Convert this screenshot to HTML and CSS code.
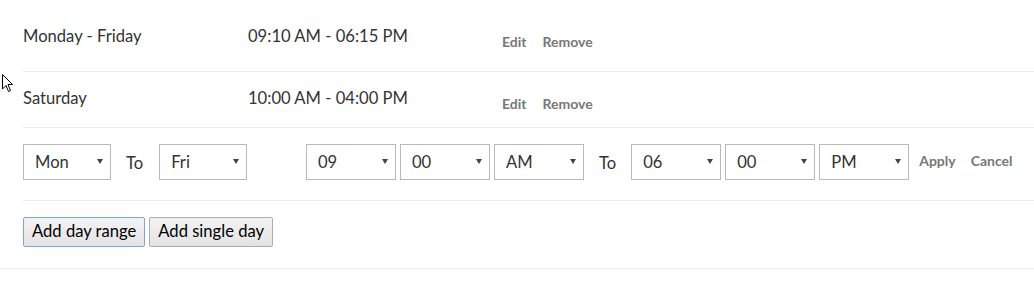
FILE: index.html
```html
<!DOCTYPE html>
<html lang="en">
<head>
    <meta charset="UTF-8">
    <meta name="viewport" content="width=device-width, initial-scale=1.0">
    <title>Opening Hours</title>
    <link rel="stylesheet" href="styles.css">
</head>
<body>
  <section class="hours">
    <div class="hours-list">
      <div class="hours-row first">
        <span class="day">Monday - Friday</span>
        <span class="time">09:10 AM - 06:15 PM</span>
        <span class="actions"><a>Edit</a><a>Remove</a></span>
      </div>
      <div class="hours-row">
        <span class="day">Saturday</span>
        <span class="time">10:00 AM - 04:00 PM</span>
        <span class="actions"><a>Edit</a><a>Remove</a></span>
      </div>

      <!-- Edit form -->
      <div class="edit-row">
        <div class="day-range">
          <span class="select day-select"><select><option>Mon</option></select></span>
          <span class="to">To</span>
          <span class="select day-select"><select><option>Fri</option></select></span>
        </div>
        <div class="time-range">
          <span class="select"><select><option>09</option></select></span>
          <span class="select"><select><option>00</option></select></span>
          <span class="select"><select><option>AM</option></select></span>
          <span class="to">To</span>
          <span class="select"><select><option>06</option></select></span>
          <span class="select"><select><option>00</option></select></span>
          <span class="select"><select><option>PM</option></select></span>
        </div>
        <span class="actions form-actions"><a>Apply</a><a>Cancel</a></span>
      </div>

      <div class="add-row">
        <button class="btn focused">Add day range</button>
        <button class="btn">Add single day</button>
      </div>
    </div>
  </section>

  <svg class="cursor" width="13" height="20" viewBox="0 0 13 20">
    <path d="M1.5 1.5 L1.5 16 L5 12.5 L7.5 18.5 L9.5 17.5 L7 11.5 L11.5 11.5 Z" fill="#fff" stroke="#000" stroke-width="1" stroke-linejoin="miter"/>
  </svg>
</body>
</html>
```

FILE: styles.css
```css
:root {
  --clr-text: #333;
  --clr-muted: #777;
  --clr-line: #ededed;
  --clr-field: #b9b9b9;
}
* { margin: 0; padding: 0; box-sizing: border-box; }
body {
  font-family: Lato, 'Open Sans', sans-serif;
  font-size: 16.6px;
  line-height: 20px;
  color: var(--clr-text);
  background: #fff;
}
.hours {
  border-bottom: 1px solid var(--clr-line);
}
.hours-list {
  padding-left: 23px;
}
.hours-row {
  display: flex;
  align-items: flex-start;
  height: 56px;
  padding-top: 16px;
  border-bottom: 1px solid var(--clr-line);
}
.hours-row.first {
  height: 72px;
  padding-top: 26px;
}
.day { width: 225px; }
.time { width: 254px; }
.actions {
  display: flex;
  gap: 16px;
  padding-top: 6px;
  font-size: 14px;
  line-height: 20px;
  font-weight: 700;
  color: var(--clr-muted);
}
.actions a { cursor: pointer; }

/* Edit form */
.edit-row {
  display: flex;
  align-items: center;
  height: 73px;
  padding-top: 16px;
  padding-bottom: 20px;
  border-bottom: 1px solid var(--clr-line);
}
.day-range {
  display: flex;
  align-items: center;
  width: 283px;
}
.time-range {
  display: flex;
  align-items: center;
  gap: 4px;
}
.to {
  margin: 0 16px 0 15px;
  padding-top: 2px;
}
.time-range .to { margin: 0 11px; }
.select {
  position: relative;
  display: block;
  width: 90px;
  height: 36px;
}
.day-select { width: 88px; }
.select select {
  appearance: none;
  -webkit-appearance: none;
  width: 100%;
  height: 100%;
  padding: 0 11px;
  border: 1px solid var(--clr-field);
  border-radius: 0;
  background: #fff;
  font: inherit;
  color: var(--clr-text);
}
.select::after {
  content: "";
  position: absolute;
  right: 8px;
  top: 15px;
  border-left: 3px solid transparent;
  border-right: 3px solid transparent;
  border-top: 5px solid #444;
  pointer-events: none;
}
.form-actions {
  margin-left: 10px;
  padding-top: 0;
  margin-top: -3px;
  gap: 15px;
}

.add-row {
  display: flex;
  gap: 4px;
  height: 67px;
  padding-top: 16px;
}
.btn {
  height: 30px;
  padding: 0 8px 2px;
  font: inherit;
  color: #000;
  background: linear-gradient(#f3f3f3, #e3e3e3);
  border: 1px solid #adadad;
  border-radius: 2px;
}
.btn.focused {
  border-color: #7aa6dc;
}

.cursor {
  position: absolute;
  left: 1px;
  top: 73px;
}
```
